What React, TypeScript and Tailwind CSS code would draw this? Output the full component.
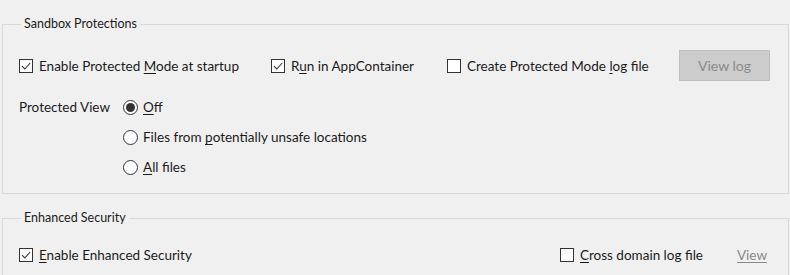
import React from 'react';

const font = "font-['Lato','Liberation_Sans',sans-serif]";

function Check({ checked }: { checked?: boolean }) {
  return (
    <span className="flex h-[14px] w-[14px] shrink-0 items-center justify-center border border-[#333] bg-white">
      {checked && (
        <svg width="12" height="12" viewBox="0 0 12 12">
          <path d="M2 6.2 L4.8 9 L10.2 3" fill="none" stroke="#333" strokeWidth="1.1" />
        </svg>
      )}
    </span>
  );
}

function Radio({ selected }: { selected?: boolean }) {
  return (
    <span className="flex h-[15px] w-[15px] shrink-0 items-center justify-center rounded-full border border-[#333] bg-white">
      {selected && <span className="h-[9px] w-[9px] rounded-full bg-[#333]" />}
    </span>
  );
}

// label text with one underlined access key
function Label({ pre, key1, post }: { pre?: string; key1: string; post?: string }) {
  return (
    <span className="whitespace-nowrap">
      {pre}
      <span className="underline underline-offset-2">{key1}</span>
      {post}
    </span>
  );
}

export default function App() {
  return (
    <div className={`h-[275px] w-[790px] overflow-hidden bg-[#f0f0f0] text-[13.5px] leading-[18px] text-[#1b1b1b] ${font}`}>
      <div className="pl-[2px] pr-[1px] pt-[15px]">
        <fieldset className="h-[179px] border border-[#d9d9d9] pl-[16px]">
          <legend className="ml-[2px] px-[3px] text-[12.5px]">Sandbox Protections</legend>

          <div className="mt-[17px] flex h-[31px] items-center">
            <div className="flex w-[252px] items-center gap-[6px]">
              <Check checked />
              <Label pre="Enable Protected " key1="M" post="ode at startup" />
            </div>
            <div className="flex w-[176px] items-center gap-[6px]">
              <Check checked />
              <Label pre="R" key1="u" post="n in AppContainer" />
            </div>
            <div className="flex w-[232px] items-center gap-[6px]">
              <Check />
              <Label pre="Create Protected Mode " key1="l" post="og file" />
            </div>
            <button className="h-[31px] w-[91px] border border-[#bfbfbf] bg-[#cccccc] text-[14px] text-[#8a8a8a]">
              View log
            </button>
          </div>

          <div className="mt-[11px] flex">
            <div className="flex h-[30px] w-[104px] items-center">Protected View</div>
            <div className="flex flex-col">
              <div className="flex h-[30px] items-center gap-[5px]">
                <Radio selected />
                <Label key1="O" post="ff" />
              </div>
              <div className="flex h-[30px] items-center gap-[5px]">
                <Radio />
                <Label pre="Files from " key1="p" post="otentially unsafe locations" />
              </div>
              <div className="flex h-[30px] items-center gap-[5px]">
                <Radio />
                <Label key1="A" post="ll files" />
              </div>
            </div>
          </div>
        </fieldset>

        <fieldset className="mt-[15px] h-[120px] border border-[#d9d9d9] pl-[16px] pr-[21px]">
          <legend className="ml-[2px] px-[3px] text-[12.5px]">Enhanced Security</legend>
          <div className="mt-[18px] flex h-[20px] items-center">
            <div className="flex items-center gap-[6px]">
              <Check checked />
              <Label key1="E" post="nable Enhanced Security" />
            </div>
            <div className="ml-auto flex items-center gap-[6px]">
              <Check />
              <Label key1="C" post="ross domain log file" />
            </div>
            <span className="ml-[34px] text-[#8a8a8a] underline underline-offset-2">View</span>
          </div>
        </fieldset>
      </div>
    </div>
  );
}
